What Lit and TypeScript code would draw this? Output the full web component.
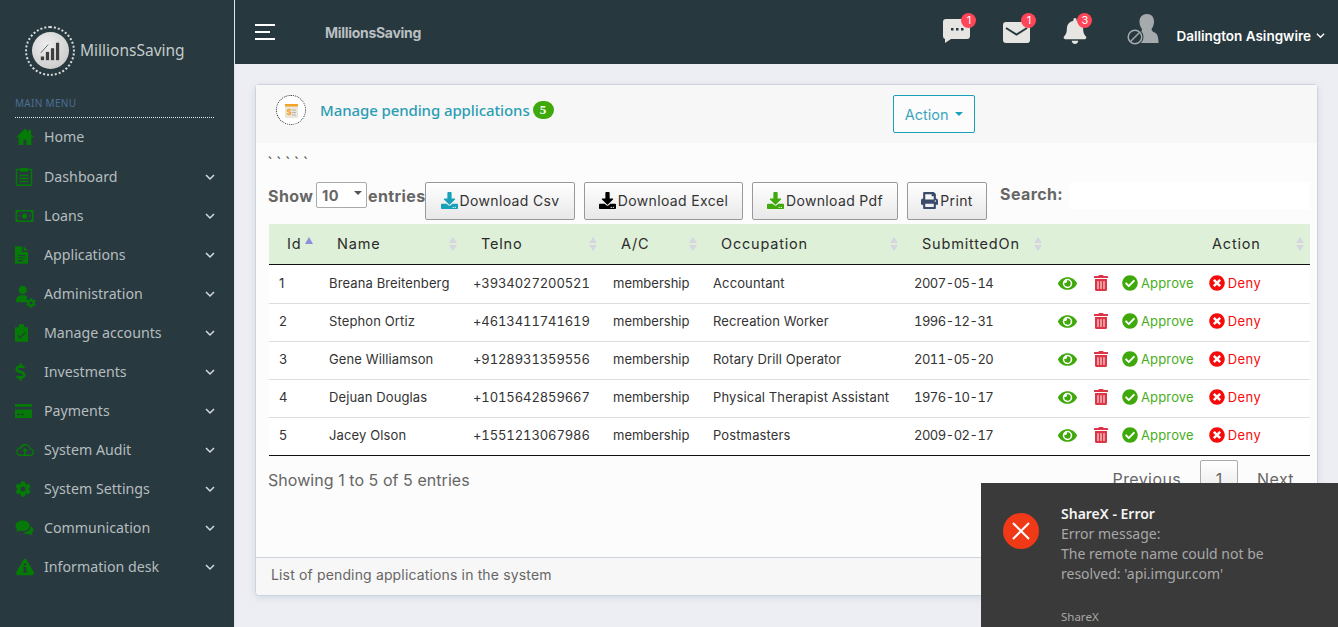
import { LitElement, html, css } from 'lit';
import { customElement } from 'lit/decorators.js';

const P = {
  check: 'M504 256c0 136.967-111.033 248-248 248S8 392.967 8 256 119.033 8 256 8s248 111.033 248 248zM227.314 387.314l184-184c6.248-6.248 6.248-16.379 0-22.627l-22.627-22.627c-6.248-6.249-16.379-6.249-22.628 0L216 308.118l-70.059-70.059c-6.248-6.248-16.379-6.248-22.628 0l-22.627 22.627c-6.248 6.248-6.248 16.379 0 22.627l104 104c6.249 6.249 16.379 6.249 22.628.001z',
  times: 'M256 8C119 8 8 119 8 256s111 248 248 248 248-111 248-248S393 8 256 8zm121.6 313.1c4.7 4.7 4.7 12.3 0 17L338 377.6c-4.7 4.7-12.3 4.7-17 0L256 312l-65.1 65.6c-4.7 4.7-12.3 4.7-17 0L134.4 338c-4.7-4.7-4.7-12.3 0-17l65.6-65-65.6-65.1c-4.7-4.7-4.7-12.3 0-17l39.6-39.6c4.7-4.7 12.3-4.7 17 0l65 65.7 65.1-65.6c4.7-4.7 12.3-4.7 17 0l39.6 39.6c4.7 4.7 4.7 12.3 0 17L312 256l65.6 65.1z',
  eye: 'M572.52 241.4C518.29 135.59 410.93 64 288 64S57.68 135.64 3.48 241.41a32.35 32.35 0 0 0 0 29.19C57.71 376.41 165.07 448 288 448s230.32-71.64 284.52-177.41a32.35 32.35 0 0 0 0-29.19zM288 400a144 144 0 1 1 144-144 143.93 143.93 0 0 1-144 144zm0-240a95.31 95.31 0 0 0-25.31 3.79 47.85 47.85 0 0 1-66.9 66.9A95.78 95.78 0 1 0 288 160z',
  trash: 'M32 464a48 48 0 0 0 48 48h288a48 48 0 0 0 48-48V128H32zm272-256a16 16 0 0 1 32 0v224a16 16 0 0 1-32 0zm-96 0a16 16 0 0 1 32 0v224a16 16 0 0 1-32 0zm-96 0a16 16 0 0 1 32 0v224a16 16 0 0 1-32 0zM432 32H312l-9.4-18.7A24 24 0 0 0 281.1 0H166.8a23.72 23.72 0 0 0-21.4 13.3L136 32H16A16 16 0 0 0 0 48v32a16 16 0 0 0 16 16h416a16 16 0 0 0 16-16V48a16 16 0 0 0-16-16z',
  cog: 'M487.4 315.7l-42.6-24.6c4.3-23.2 4.3-47 0-70.2l42.6-24.6c4.9-2.8 7.1-8.6 5.5-14-11.1-35.6-30-67.8-54.7-94.6-3.8-4.1-10-5.1-14.8-2.3L380.8 110c-17.9-15.4-38.5-27.3-60.8-35.1V25.8c0-5.6-3.9-10.5-9.4-11.7-36.7-8.2-74.3-7.8-109.2 0-5.5 1.2-9.4 6.1-9.4 11.7V75c-22.2 7.9-42.8 19.8-60.8 35.1L88.7 85.5c-4.9-2.8-11-1.9-14.8 2.3-24.7 26.7-43.6 58.9-54.7 94.6-1.7 5.4.6 11.2 5.5 14L67.3 221c-4.3 23.2-4.3 47 0 70.2l-42.6 24.6c-4.9 2.8-7.1 8.6-5.5 14 11.1 35.6 30 67.8 54.7 94.6 3.8 4.1 10 5.1 14.8 2.3l42.6-24.6c17.9 15.4 38.5 27.3 60.8 35.1v49.2c0 5.6 3.9 10.5 9.4 11.7 36.7 8.2 74.3 7.8 109.2 0 5.5-1.2 9.4-6.1 9.4-11.7v-49.2c22.2-7.9 42.8-19.8 60.8-35.1l42.6 24.6c4.9 2.8 11 1.9 14.8-2.3 24.7-26.7 43.6-58.9 54.7-94.6 1.5-5.5-.7-11.3-5.6-14.1zM256 336c-44.1 0-80-35.9-80-80s35.9-80 80-80 80 35.9 80 80-35.9 80-80 80z',
  print: 'M448 192V77.25c0-8.49-3.37-16.62-9.37-22.63L393.37 9.37c-6-6-14.14-9.37-22.63-9.37H96C78.33 0 64 14.33 64 32v160c-35.35 0-64 28.65-64 64v112c0 8.84 7.16 16 16 16h48v96c0 17.67 14.33 32 32 32h320c17.67 0 32-14.33 32-32v-96h48c8.84 0 16-7.16 16-16V256c0-35.35-28.65-64-64-64zm-64 256H128v-96h256v96zm0-224H128V64h192v48c0 8.84 7.16 16 16 16h48v96zm48 72c-13.25 0-24-10.75-24-24 0-13.26 10.75-24 24-24s24 10.74 24 24c0 13.25-10.75 24-24 24z',
  download: 'M216 0h80c13.3 0 24 10.7 24 24v168h87.7c17.8 0 26.7 21.5 14.1 34.1L269.7 378.3c-7.5 7.5-19.8 7.5-27.3 0L90.1 226.1c-12.6-12.6-3.7-34.1 14.1-34.1H192V24c0-13.3 10.7-24 24-24zm296 376v112c0 13.3-10.7 24-24 24H24c-13.3 0-24-10.7-24-24V376c0-13.3 10.7-24 24-24h146.7l49 49c20.1 20.1 52.5 20.1 72.6 0l49-49H488c13.3 0 24 10.7 24 24zm-124 88c0-11-9-20-20-20s-20 9-20 20 9 20 20 20 20-9 20-20zm64 0c0-11-9-20-20-20s-20 9-20 20 9 20 20 20 20-9 20-20z',
  dollar: 'M209.2 233.4l-108-31.6C88.7 198.2 80 186.5 80 173.5c0-16.3 13.2-29.5 29.5-29.5h66.3c12.2 0 24.2 3.7 34.2 10.5 6.1 4.1 14.3 3.1 19.5-2l34.8-34c7.1-6.9 6.1-18.4-1.8-24.5C238 74.8 207.4 64.1 176 64V16c0-8.8-7.2-16-16-16h-32c-8.8 0-16 7.2-16 16v48h-2.5C45.8 64-5.4 118.7.5 183.6c4.2 46.1 39.4 83.6 83.8 96.6l102.5 30c12.5 3.7 21.2 15.3 21.2 28.3 0 16.3-13.2 29.5-29.5 29.5h-66.3C100 368 88 364.3 78 357.5c-6.1-4.1-14.3-3.1-19.5 2l-34.8 34c-7.1 6.9-6.1 18.4 1.8 24.5 24.5 19.2 55.1 29.9 86.5 30v48c0 8.8 7.2 16 16 16h32c8.8 0 16-7.2 16-16v-48.2c46.6-.9 90.3-28.6 105.7-72.7 21.5-61.6-14.6-124.8-72.5-141.7z',
  bell: 'M224 512c35.32 0 63.97-28.65 63.97-64H160.03c0 35.35 28.65 64 63.97 64zm215.39-149.71c-19.32-20.76-55.47-51.99-55.47-154.29 0-77.7-54.48-139.9-127.94-155.16V32c0-17.67-14.32-32-31.98-32s-31.98 14.33-31.98 32v20.84C118.56 68.1 64.08 130.3 64.08 208c0 102.3-36.15 133.53-55.47 154.29-6 6.45-8.66 14.16-8.61 21.71.11 16.4 12.98 32 32.1 32h383.8c19.12 0 32-15.6 32.1-32 .05-7.55-2.61-15.27-8.61-21.71z',
  // hand drawn sidebar glyphs, all in a 24 box
  home: 'M12 2L0 13.5h3.5V24H10v-7h4v7h6.5V13.5H24l-4-3.8V3.5h-3.5v2.9z',
  board: 'M3 1h4V0h10v1h4a2 2 0 0 1 2 2v19a2 2 0 0 1-2 2H3a2 2 0 0 1-2-2V3a2 2 0 0 1 2-2zm0 2v19h18V3h-4v2H7V3zm3 6h12v2H6zm0 4h12v2H6zm0 4h12v2H6z',
  money: 'M0 4h24v16H0zM4 6a2 2 0 0 1-2 2v8a2 2 0 0 1 2 2h16a2 2 0 0 1 2-2V8a2 2 0 0 1-2-2zm8 2.5a3.5 3.5 0 1 1 0 7 3.5 3.5 0 0 1 0-7zM4 11h2v2H4zm14 0h2v2h-2z',
  file: 'M3 0h10v8h8v16H3zM15 0l6 6h-6zM7 12v1.5h10V12zm0 3.5V17h10v-1.5zm0 3.5v1.5h7V19z',
  clip: 'M3 4h5V3a4 4 0 0 1 8 0v1h5v20H3zm4.2 10.6L6 15.8l4 4 8-8-1.2-1.2-6.8 6.8z',
  card: 'M0 2h24v4H0zM0 10h24v12H0zM3 16v2h4v-2zm6 0v2h4v-2z',
  cloud: 'M19.4 10a7.5 7.5 0 0 0-14.3-1.5A5.8 5.8 0 0 0 6 20h12.5a5 5 0 0 0 .9-10zM18.5 18H6a3.8 3.8 0 0 1-.3-7.6l1.5-.1.5-1.4a5.5 5.5 0 0 1 10.2.9l.4 1.9 1.5.1a3 3 0 0 1-1.8 6.2zM12 9l4 4.5h-3V18h-2v-4.5H8z',
  chat: 'M9.5 2C4.3 2 0 5 0 9c0 1.8.9 3.4 2.3 4.7-.4 1.2-1.3 2.3-2.3 3 2 0 3.7-.6 5-1.5 1.3.5 2.9.8 4.5.8 5.2 0 9.5-3 9.5-7S14.7 2 9.5 2zM20.3 9.5c.1 4.5-4.3 8-10 8.2 1.3 1.6 3.5 2.6 6 2.6.6 0 1.3 0 1.9-.2 1.3 1 3.2 1.4 5.2 1.4-1-.6-1.6-1.5-2-2.5 1.6-1.1 2.6-2.7 2.6-4.4 0-2.3-1.5-4.1-3.7-5.1z',
  warn: 'M12 1a2.5 2.5 0 0 1 2.2 1.3l9.4 16.5A2.7 2.7 0 0 1 21.3 23H2.7a2.7 2.7 0 0 1-2.3-4.2L9.8 2.3A2.5 2.5 0 0 1 12 1zm-1.6 6v3h3.2V7zm-1 5v1.6h1V18h-1v1.6h5.2V18h-1v-6z',
  user: 'M9 1a5.5 5.5 0 1 1 0 11A5.5 5.5 0 0 1 9 1zM0 21.5C0 16.5 3 13.5 7 13.5h4c1.5 0 2.7.4 3.7 1.1-.5 1.9-.5 3.900 0 5.800.2.900.6 1.700 1 2.600H1.500A1.500 1.500 0 0 1 0 21.500z',
};

const ic = (d: string, cls: string, box = '0 0 24 24') =>
  html`<svg class=${cls} viewBox=${box} fill="currentColor"><path d=${d}></path></svg>`;

const NAV = [
  { label: 'Home', icon: P.home, box: '0 0 24 24', w: 20, chevron: false },
  { label: 'Dashboard', icon: P.board, box: '0 0 24 24', w: 18, chevron: true },
  { label: 'Loans', icon: P.money, box: '0 0 24 24', w: 19, chevron: true },
  { label: 'Applications', icon: P.file, box: '3 0 18 24', w: 13, chevron: true },
  { label: 'Administration', icon: P.user, box: '0 0 24 24', w: 20, chevron: true, gear: true },
  { label: 'Manage accounts', icon: P.clip, box: '3 0 18 24', w: 13, chevron: true },
  { label: 'Investments', icon: P.dollar, box: '0 0 288 512', w: 11, chevron: true },
  { label: 'Payments', icon: P.card, box: '0 0 24 24', w: 17, chevron: true },
  { label: 'System Audit', icon: P.cloud, box: '0 0 24 24', w: 20, chevron: true },
  { label: 'System Settings', icon: P.cog, box: '0 0 512 512', w: 16, chevron: true },
  { label: 'Communication', icon: P.chat, box: '0 0 24 24', w: 19, chevron: true },
  { label: 'Information desk', icon: P.warn, box: '0 0 24 24', w: 20, chevron: true },
];

const ROWS = [
  ['1', 'Breana Breitenberg', '+3934027200521', 'membership', 'Accountant', '2007-05-14'],
  ['2', 'Stephon Ortiz', '+4613411741619', 'membership', 'Recreation Worker', '1996-12-31'],
  ['3', 'Gene Williamson', '+9128931359556', 'membership', 'Rotary Drill Operator', '2011-05-20'],
  ['4', 'Dejuan Douglas', '+1015642859667', 'membership', 'Physical Therapist Assistant', '1976-10-17'],
  ['5', 'Jacey Olson', '+1551213067986', 'membership', 'Postmasters', '2009-02-17'],
];

const HEADS = ['Id', 'Name', 'Telno', 'A/C', 'Occupation', 'SubmittedOn', ''];
const CELL_CLASS = ['', 'nm', 'tel', '', 'nm', 'date'];

@customElement('app-root')
export class AppRoot extends LitElement {
  static styles = css`
    :host {
      display: flex;
      position: relative;
      width: 1338px;
      height: 627px;
      overflow: hidden;
      background: #eceef3;
      font-family: Inter, 'Liberation Sans', sans-serif;
      color: #333;
    }
    .side {
      width: 234px;
      flex: none;
      background: #28393f;
      border-right: 1px solid #dfe3ea;
      box-sizing: content-box;
      font-family: 'Noto Sans', 'Open Sans', sans-serif;
    }
    .brand {
      display: flex;
      align-items: center;
      gap: 5px;
      padding: 25px 0 0 25px;
      height: 51px;
      color: #c4cacb;
      font-size: 15.5px;
    }
    .brand span { margin-top: -2px; }
    .ring {
      width: 46px;
      height: 46px;
      border: 2px dotted #d9dcdc;
      border-radius: 50%;
      display: flex;
      align-items: center;
      justify-content: center;
    }
    .disc {
      width: 37px;
      height: 37px;
      border-radius: 50%;
      background: radial-gradient(circle at 40% 35%, #eee, #c2c2c2);
      color: #3d3d3d;
      display: flex;
      align-items: center;
      justify-content: center;
    }
    .disc svg { width: 22px; height: 22px; }
    .menu-label {
      margin: 21px 20px 0 15px;
      padding-bottom: 7px;
      border-bottom: 1px dotted #e4e8e8;
      font-size: 10px;
      line-height: 13px;
      letter-spacing: 0.3px;
      color: #4d6f96;
      width: 199px;
      box-sizing: border-box;
    }
    .nav { display: flex; flex-direction: column; margin-top: -1px; }
    .nav-item {
      height: 39px;
      display: flex;
      align-items: center;
      padding: 0 19px 0 15px;
      color: #b6bdbf;
      font-size: 14.2px;
    }
    .nav-item:first-child { height: 38px; margin-bottom: 2px; }
    .nav-ic { width: 29px; flex: none; display: flex; color: #067a06; position: relative; }
    .nav-ic svg { height: 18px; display: block; }
    .gear { position: absolute; width: 10px; height: 10px; left: 11px; top: 9px; }
    .nav-label { flex: 1; }
    .chev { width: 10px; height: 10px; color: #d5dadc; }

    .main { flex: 1; min-width: 0; display: flex; flex-direction: column; }
    .top {
      height: 64px;
      flex: none;
      background: #27383e;
      display: flex;
      align-items: center;
      position: relative;
    }
    .burger { margin-left: 20px; width: 20px; display: flex; flex-direction: column; gap: 5px; }
    .burger i { height: 2px; background: #fff; display: block; }
    .burger i:nth-child(2) { width: 15px; }
    .top-brand { margin-left: 50px; color: #b9bfc2; font-size: 14px; font-weight: 700; letter-spacing: -0.3px; }
    .top-icons { margin-left: auto; display: flex; align-items: center; }
    .ti { position: relative; color: #e6e5e1; display: flex; width: 60px; margin-top: -2px; }
    .ti svg { height: 26px; width: 27px; overflow: visible; }
    .ti.bell { width: 63px; }
    .ti.bell svg { width: 24px; }
    .dot {
      position: absolute;
      top: -5px;
      left: 18px;
      width: 15px;
      height: 15px;
      border-radius: 50%;
      background: #ff4558;
      color: #fff;
      font-size: 11px;
      line-height: 15px;
      text-align: center;
    }
    .bell .dot { left: 14px; }
    .avatar { width: 33px; height: 32px; margin: -4px 17px 0 0; }
    .avatar svg { width: 33px; height: 32px; display: block; }
    .uname { color: #fff; font-size: 13.5px; font-weight: 600; white-space: nowrap; margin-top: 8px; }
    .top-chev { width: 9px; height: 9px; margin: 6px 13px 0 5px; color: #fff; }

    .card {
      margin: 20px 20px 0 20px;
      height: 512px;
      flex: none;
      background: #fcfcfc;
      border: 1px solid #ccd2de;
      border-radius: 4px;
      box-shadow: 0 2px 6px rgba(150, 160, 180, 0.25);
      display: flex;
      flex-direction: column;
      box-sizing: border-box;
    }
    .card-head {
      height: 58px;
      background: #f7f7f7;
      display: flex;
      align-items: center;
      padding: 0 0 8px 20px;
      box-sizing: border-box;
      flex: none;
    }
    .seal {
      width: 30px;
      height: 30px;
      box-sizing: border-box;
      border: 1px dotted #222;
      border-radius: 50%;
      display: flex;
      align-items: center;
      justify-content: center;
      background: #fff;
    }
    .seal svg { width: 17px; height: 17px; }
    .title {
      margin-left: 14px;
      color: #2a9db4;
      font-family: 'Noto Sans', 'Open Sans', sans-serif;
      font-size: 15px;
      font-weight: 500;
      letter-spacing: -0.1px;
    }
    .badge {
      margin-left: 3px;
      width: 21px;
      height: 18px;
      border-radius: 9px;
      background: #3fa90b;
      color: #fff;
      font-size: 13px;
      font-weight: 700;
      line-height: 18px;
      text-align: center;
      font-family: 'Liberation Serif', serif;
    }
    .action {
      margin: 12px 0 0 339px;
      width: 82px;
      height: 38px;
      box-sizing: border-box;
      border: 1px solid #17a2b8;
      border-radius: 2px;
      color: #3da5bb;
      font-size: 14.5px;
      display: flex;
      align-items: center;
      justify-content: center;
      gap: 6px;
      background: #fcfcfc;
      position: relative;
      top: -2px;
    }
    .action::after, .caret-sel::after {
      content: '';
      border-left: 4px solid transparent;
      border-right: 4px solid transparent;
      border-top: 4px solid #17a2b8;
    }
    .card-body { flex: 1; padding: 0 7px 0 13px; min-height: 0; display: flex; flex-direction: column; }
    .ticks {
      font-family: 'Noto Sans', sans-serif;
      font-size: 14px;
      line-height: 12px;
      color: #444;
      margin: 14px 0 0 -1px;
      height: 25px;
      word-spacing: 1.3px;
    }
    .controls { display: flex; align-items: flex-start; height: 42px; margin-left: -1px; color: #666; font-size: 16px; font-weight: 700; letter-spacing: 0.4px; }
    .lbl { line-height: 28px; }
    .lbl.show { width: 46px; }
    .lbl.entries { width: 57px; }
    .caret-sel {
      margin: 0 1px 0 2px;
      width: 51px;
      height: 26px;
      box-sizing: border-box;
      border: 1px solid #aaa;
      border-radius: 2px;
      display: flex;
      align-items: center;
      justify-content: space-between;
      padding: 0 4px 0 5px;
      font-size: 14.5px;
      background: #fff;
    }
    .caret-sel::after { border-top-color: #555; margin-bottom: 4px; }
    .btn {
      height: 38px;
      box-sizing: border-box;
      border: 1px solid #999;
      border-radius: 2px;
      background: linear-gradient(#fff, #e8e8e8);
      display: flex;
      align-items: center;
      justify-content: center;
      gap: 2px;
      color: #333;
      font-size: 14px;
      letter-spacing: 0.35px;
      font-weight: 400;
      margin-right: 9px;
      padding-bottom: 1px;
      flex: none;
    }
    .btn svg { width: 17px; height: 17px; display: block; }
    .btn.csv { width: 150px; }
    .btn.csv svg { color: #17a2b8; }
    .btn.xls { width: 159px; }
    .btn.xls svg { color: #000; }
    .btn.pdf { width: 146px; }
    .btn.pdf svg { color: #3fa90b; }
    .btn.prn { width: 80px; }
    .btn.prn svg { color: #3a4a6b; }
    .search { margin-left: 4px; line-height: 25px; width: 63px; white-space: nowrap; font-size: 16px; }
    .search-box { margin-left: 7px; width: 240px; height: 27px; background: #fff; }

    table { border-collapse: separate; border-spacing: 0; table-layout: fixed; width: 1041px; font-size: 13px; color: #333; }
    col.c1 { width: 50px; } col.c2 { width: 144px; } col.c3 { width: 140px; } col.c4 { width: 100px; }
    col.c5 { width: 201px; } col.c6 { width: 144px; } col.c7 { width: 262px; }
    th {
      height: 41px;
      box-sizing: border-box;
      background: #dff0d8;
      border-bottom: 1px solid #111;
      font-weight: 400;
      font-size: 14.5px;
      text-align: left;
      padding: 0 0 2px 18px;
      color: #2b2b2b;
      position: relative;
      letter-spacing: 0.8px;
    }
    th.act { padding-left: 164px; }
    .sort {
      position: absolute;
      right: 6px;
      top: 13px;
      display: flex;
      flex-direction: column;
      gap: 2px;
    }
    .sort i {
      display: block;
      border-left: 4px solid transparent;
      border-right: 4px solid transparent;
      border-bottom: 6px solid #d6d6e0;
    }
    .sort i + i { border-bottom: 0; border-top: 6px solid #d6d6e0; }
    .sort-up { position: absolute; left: 36px; top: 13px; border-left: 4.5px solid transparent; border-right: 4.5px solid transparent; border-bottom: 7px solid #8a90dc; }
    td {
      height: 38px;
      box-sizing: border-box;
      padding: 0 0 3px 10px;
      border-bottom: 1px solid #dddddd;
      background: #fff;
      white-space: nowrap;
    }
    tr:first-child td { height: 39px; padding-bottom: 2px; }
    td.nm { letter-spacing: 0.12px; }
    td.tel { font-variant-numeric: tabular-nums; letter-spacing: -0.09px; }
    td.date { font-variant-numeric: tabular-nums; letter-spacing: -0.5px; }
    tr:last-child td { border-bottom: 1px solid #111; }
    .acts { display: flex; align-items: center; color: #3fa90b; }
    .acts svg { display: block; }
    .eye { width: 19px; height: 17px; margin-right: 17px; }
    .bin { width: 14px; height: 16px; margin-right: 14px; color: #dc3545; }
    .ok { width: 16px; height: 16px; margin-right: 3px; }
    .no { width: 16px; height: 16px; margin: 0 3px 0 15px; color: #f80a0a; }
    .approve { color: #48ad1c; letter-spacing: 0.15px; }
    .deny { color: #f80a0a; letter-spacing: 0.4px; }

    .foot-row { display: flex; align-items: flex-start; margin-top: 12px; margin-left: -1px; }
    .info { font-size: 16px; color: #666; line-height: 24px; letter-spacing: 0.05px; }
    .pager { display: flex; align-items: center; color: #666; font-size: 16px; letter-spacing: 0.4px; margin: -8px -3px 0 auto; }
    .pager span { padding: 0 19px; }
    .pager .cur { border: 1px solid #aaa; border-radius: 2px; width: 38px; height: 38px; padding: 0; display: flex; align-items: center; justify-content: center; box-sizing: border-box; background: linear-gradient(#fff, #e6e6e6); }
    .card-foot {
      height: 37px;
      flex: none;
      background: #f7f7f7;
      border-top: 1px solid #ccd2de;
      padding-left: 15px;
      line-height: 34px;
      font-size: 14px;
      letter-spacing: 0.15px;
      color: #666;
      border-radius: 0 0 4px 4px;
    }

    .toast {
      position: absolute;
      left: 981px;
      top: 483px;
      width: 357px;
      height: 144px;
      background: #3a3a3a;
      display: flex;
      font-family: 'Noto Sans', 'Open Sans', sans-serif;
      color: #a8a8a8;
      font-size: 14px;
      line-height: 20px;
    }
    .toast-ic { margin: 30px 0 0 22px; width: 36px; height: 36px; flex: none; }
    .toast-body { margin: 21px 0 0 22px; }
    .toast-title { color: #f4f4f4; font-weight: 600; }
    .toast-src { margin-top: 25px; font-size: 11.5px; line-height: 16px; }
  `;

  render() {
    return html`
      <aside class="side">
        <div class="brand">
          <div class="ring">
            <div class="disc">
              <svg viewBox="0 0 24 24" fill="currentColor">
                <rect x="2" y="18" width="3.5" height="4"></rect>
                <rect x="7.5" y="13" width="3.5" height="9"></rect>
                <rect x="13" y="9" width="3.5" height="13"></rect>
                <rect x="18.5" y="3" width="3.5" height="19"></rect>
                <path d="M2 14l8-9" stroke="currentColor" stroke-width="0.8" fill="none"></path>
              </svg>
            </div>
          </div>
          <span>MillionsSaving</span>
        </div>
        <div class="menu-label">MAIN MENU</div>
        <nav class="nav">
          ${NAV.map((n) => html`
            <div class="nav-item">
              <span class="nav-ic">
                <svg viewBox=${n.box} fill="currentColor" style="width:${n.w}px"><path d=${n.icon}></path></svg>
                ${n.gear ? ic(P.cog, 'gear', '0 0 512 512') : ''}
              </span>
              <span class="nav-label">${n.label}</span>
              ${n.chevron ? html`<svg class="chev" viewBox="0 0 10 10" fill="none" stroke="currentColor" stroke-width="1.5"><path d="M1 3l4 4 4-4"></path></svg>` : ''}
            </div>`)}
        </nav>
      </aside>

      <div class="main">
        <header class="top">
          <div class="burger"><i></i><i></i><i></i></div>
          <div class="top-brand">MillionsSaving</div>
          <div class="top-icons">
            <div class="ti">
              <svg viewBox="0 0 27 26" fill="currentColor"><path transform="translate(0,-1)" d="M3 2h21a3 3 0 0 1 3 3v14a3 3 0 0 1-3 3H8l-6 4 0-4a3 3 0 0 1-2-3V5a3 3 0 0 1 3-3zM8 11h2.5v2.5H8zm5 0h2.5v2.5H13zm5 0h2.5v2.5H18z" fill-rule="evenodd"></path></svg>
              <span class="dot">1</span>
            </div>
            <div class="ti">
              <svg viewBox="0 0 27 26" fill="currentColor"><path d="M3 4h21a3 3 0 0 1 3 3v15a3 3 0 0 1-3 3H3a3 3 0 0 1-3-3V7a3 3 0 0 1 3-3z"></path><path d="M3 10l10.5 6.5L24 10" fill="none" stroke="#27383e" stroke-width="2"></path></svg>
              <span class="dot">1</span>
            </div>
            <div class="ti bell">
              <svg viewBox="0 0 448 512" fill="currentColor"><path d=${P.bell}></path></svg>
              <span class="dot">3</span>
            </div>
            <div class="avatar">
              <svg viewBox="0 0 33 32">
                <path d="M21 0c4.5 0 7 3 7 7.5 0 3-1 5.5-2.5 7.5 0 2 2 3 4 4 2 1 3 5 3 10H12V20c2-1 4-2 4-5-1.5-2-2.5-4.5-2.5-7.5C13.5 3 16.5 0 21 0z" fill="#a5abad"></path>
                <circle cx="9" cy="23" r="8.5" fill="#27383e"></circle>
                <circle cx="9" cy="23" r="6.8" fill="none" stroke="#a5abad" stroke-width="1.5"></circle>
                <path d="M4.5 27.5L13.5 18.5" stroke="#a5abad" stroke-width="1.5"></path>
              </svg>
            </div>
            <span class="uname">Dallington Asingwire</span>
            <svg class="top-chev" viewBox="0 0 10 10" fill="none" stroke="currentColor" stroke-width="1.5"><path d="M1 3l4 4 4-4"></path></svg>
          </div>
        </header>

        <section class="card">
          <div class="card-head">
            <div class="seal">
              <svg viewBox="0 0 17 17">
                <rect x="2" y="2" width="13" height="14" rx="1" fill="#e9e6dd"></rect>
                <rect x="2" y="2" width="13" height="2.5" fill="#f4a327"></rect>
                <text x="3.5" y="13" font-size="8" font-weight="700" fill="#f4a327">$</text>
                <path d="M9 8h4M9 10.5h4M9 13h4" stroke="#b8b5aa" stroke-width="1"></path>
              </svg>
            </div>
            <span class="title">Manage pending applications</span>
            <span class="badge">5</span>
            <div class="action">Action</div>
          </div>
          <div class="card-body">
            <div class="ticks">\` \` \` \` \`</div>
            <div class="controls">
              <span class="lbl show">Show</span>
              <div class="caret-sel">10</div>
              <span class="lbl entries">entries</span>
              <div class="btn csv">${ic(P.download, '', '0 0 512 512')}Download Csv</div>
              <div class="btn xls">${ic(P.download, '', '0 0 512 512')}Download Excel</div>
              <div class="btn pdf">${ic(P.download, '', '0 0 512 512')}Download Pdf</div>
              <div class="btn prn">${ic(P.print, '', '0 0 512 512')}Print</div>
              <span class="search">Search:</span>
              <div class="search-box"></div>
            </div>
            <table>
              <colgroup>
                <col class="c1" /><col class="c2" /><col class="c3" /><col class="c4" />
                <col class="c5" /><col class="c6" /><col class="c7" />
              </colgroup>
              <thead>
                <tr>
                  ${HEADS.map((h, i) => html`
                    <th class=${i === 6 ? 'act' : ''}>
                      ${i === 6 ? 'Action' : h}
                      ${i === 0
                        ? html`<i class="sort-up"></i>`
                        : html`<span class="sort"><i></i><i></i></span>`}
                    </th>`)}
                </tr>
              </thead>
              <tbody>
                ${ROWS.map((r) => html`
                  <tr>
                    ${r.map((c, i) => html`<td class=${CELL_CLASS[i]}>${c}</td>`)}
                    <td>
                      <div class="acts">
                        ${ic(P.eye, 'eye', '0 0 576 512')}
                        ${ic(P.trash, 'bin', '0 0 448 512')}
                        ${ic(P.check, 'ok', '0 0 512 512')}
                        <span class="approve">Approve</span>
                        ${ic(P.times, 'no', '0 0 512 512')}
                        <span class="deny">Deny</span>
                      </div>
                    </td>
                  </tr>`)}
              </tbody>
            </table>
            <div class="foot-row">
              <span class="info">Showing 1 to 5 of 5 entries</span>
              <div class="pager"><span>Previous</span><span class="cur">1</span><span>Next</span></div>
            </div>
          </div>
          <div class="card-foot">List of pending applications in the system</div>
        </section>
      </div>

      <div class="toast">
        <svg class="toast-ic" viewBox="0 0 36 36">
          <circle cx="18" cy="18" r="18" fill="#f03a17"></circle>
          <path d="M10 10l16 16M26 10L10 26" stroke="#fff" stroke-width="2"></path>
        </svg>
        <div class="toast-body">
          <div class="toast-title">ShareX - Error</div>
          <div>Error message:</div>
          <div>The remote name could not be</div>
          <div>resolved: 'api.imgur.com'</div>
          <div class="toast-src">ShareX</div>
        </div>
      </div>
    `;
  }
}
